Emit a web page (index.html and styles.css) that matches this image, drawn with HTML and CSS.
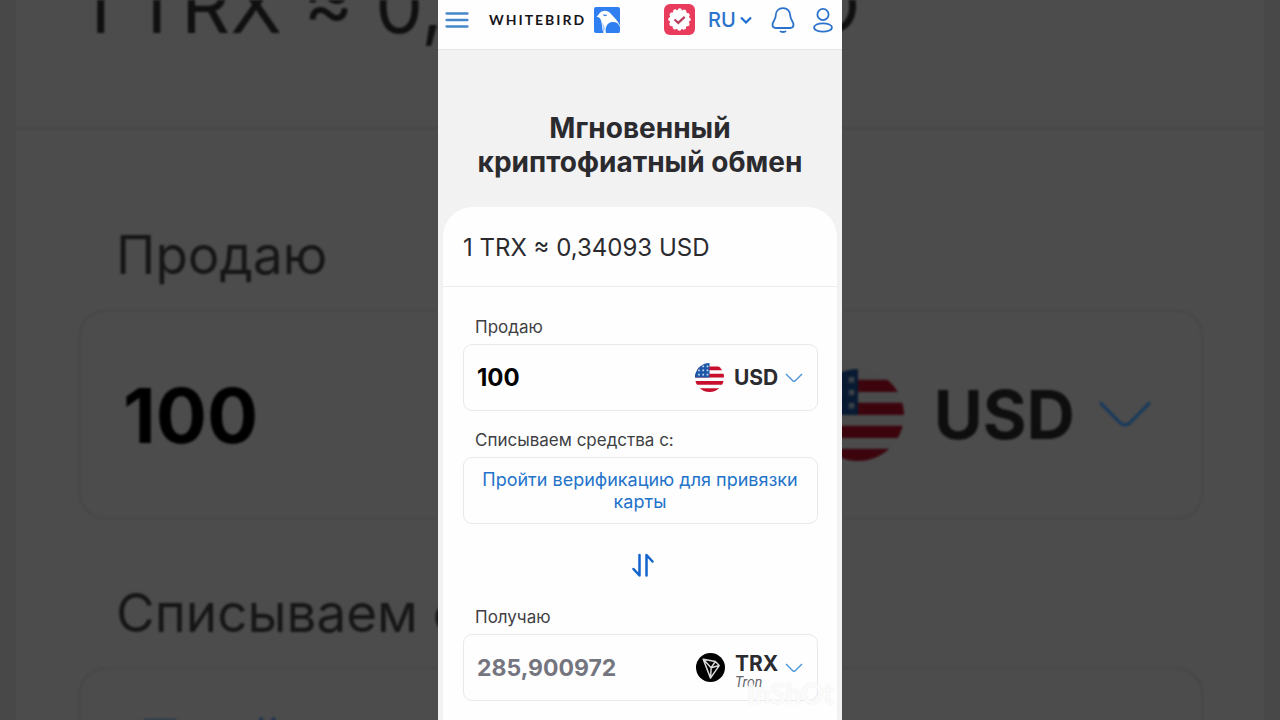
FILE: index.html
```html
<!DOCTYPE html>
<html lang="ru">
<head>
  <meta charset="UTF-8" />
  <meta name="viewport" content="width=device-width, initial-scale=1.0" />
  <title>Whitebird</title>
  <link rel="stylesheet" href="styles.css">
</head>
<body>
  <!-- enlarged dark copy behind the phone column -->
  <div class="backdrop" aria-hidden="true">
    <div class="backdrop-card">
      <div class="backdrop-rate">1 TRX ≈ 0,34093 USD</div>
      <div class="backdrop-form">
        <div class="backdrop-label">Продаю</div>
        <div class="backdrop-field">
          <span class="backdrop-amount">100</span>
          <svg class="backdrop-flag" viewBox="0 0 30 30"><use href="#flag-us" /></svg>
          <span class="backdrop-code">USD</span>
          <svg class="backdrop-arrow" viewBox="0 0 18 10"><path d="M1 1l6.500 6.600q1.500 1.200 3 0L17 1" /></svg>
        </div>
        <div class="backdrop-label">Списываем средства с:</div>
        <div class="backdrop-field backdrop-link">Пройти верификацию для привязки карты</div>
      </div>
    </div>
  </div>

  <div class="phone">
    <header class="topbar">
      <button class="icon-btn" aria-label="Меню">
        <svg width="24" height="24" viewBox="0 0 24 24" fill="none" stroke="#4787cc" stroke-width="2.300" stroke-linecap="round">
          <path d="M1.500 5.500h21M1.500 12h21M1.500 18.500h21" />
        </svg>
      </button>
      <a class="logo" href="#">
        <span>WHITEBIRD</span>
        <svg width="26" height="26" viewBox="0 0 26 26">
          <rect width="26" height="26" rx="2" fill="#2f7ff0" />
          <path d="M2.500 9.800C4.500 8.700 5 6 7.500 4.600 11 2.600 15 4 17.300 7.300c3.600 3.800 6.400 6.200 8.700 11.200v6.500l-4 1H9.500C7.800 22 8.200 18 7.300 14.500 6.800 12 5.800 10.200 2.500 9.800z" fill="#fff" />
          <path d="M9.500 26c-1-3.500-.6-6.800-1.300-10.500C10 18 10.500 19 11 22z" fill="#a9cbfa" />
          <path d="M12 26c-1.500-6 1.500-10.500 6.500-11 3.500-.2 6.500 1.800 7.500 5V24q0 2-2 2z" fill="#2f7ff0" />
          <path d="M9.500 7.600c.6 1.300 2.300 1.300 3 0" fill="none" stroke="#2f7ff0" stroke-width="1.200" />
        </svg>
      </a>
      <div class="topbar-right">
        <button class="icon-btn" aria-label="Верификация">
          <svg width="31" height="31" viewBox="0 0 31 31">
            <rect width="31" height="31" rx="6" fill="#e93b5c" />
            <circle cx="15.500" cy="15.500" r="9.800" fill="#fff" />
            <circle cx="15.500" cy="15.500" r="9.200" fill="none" stroke="#fff" stroke-width="4.200" stroke-linecap="round" stroke-dasharray="0.01 4.807" />
            <path d="M10.500 15.500l3.800 3.400 6.400-6" fill="none" stroke="#b8405f" stroke-width="2.200" />
          </svg>
        </button>
        <div class="lang">
          <select aria-label="Язык">
            <option>RU</option>
          </select>
          <svg width="12" height="8" viewBox="0 0 12 8" fill="none" stroke="#1f6fd0" stroke-width="2.200"><path d="M1 1.500l5 5 5-5" /></svg>
        </div>
        <button class="icon-btn bell" aria-label="Уведомления">
          <svg width="24" height="26" viewBox="0 0 24 26" fill="none" stroke="#2b72cc" stroke-width="1.800" stroke-linecap="round">
            <path d="M12 1.200c-4.600 0-7.300 3.200-7.300 7.600 0 4.200-3.200 5.600-3.200 9 0 2 1.200 3.200 3.200 3.200h14.600c2 0 3.200-1.200 3.200-3.200 0-3.400-3.200-4.800-3.200-9 0-4.400-2.700-7.600-7.300-7.600z" />
            <path d="M9.500 24.500q2.500 1 5 0" />
          </svg>
        </button>
        <button class="icon-btn" aria-label="Профиль">
          <svg width="20" height="26" viewBox="0 0 20 26" fill="none" stroke="#2b72cc" stroke-width="1.800">
            <circle cx="10" cy="7.500" r="5.600" />
            <ellipse cx="10" cy="20.500" rx="9" ry="4.200" />
          </svg>
        </button>
      </div>
    </header>

    <main>
      <h1>Мгновенный криптофиатный обмен</h1>

      <form class="card">
        <div class="rate">1 TRX ≈ 0,34093 USD</div>

        <div class="fields">
          <div class="group">
            <label for="sell">Продаю</label>
            <div class="field">
              <input type="text" id="sell" value="100" />
              <svg class="coin" viewBox="0 0 30 30">
                <defs>
                  <clipPath id="flag-clip"><circle cx="15" cy="15" r="15" /></clipPath>
                  <g id="flag-us" clip-path="url(#flag-clip)">
                    <path class="stripe-light" d="M0 0h30v30H0z" />
                    <path fill="#c8102e" d="M0 3.500h30v4H0zM0 11h30v4H0zM0 18.500h30v4H0zM0 26h30v4H0z" />
                    <path fill="#1c57a8" d="M0 0h15v15H0z" />
                    <path fill="none" stroke="#c5d8f0" stroke-width="1.800" stroke-dasharray="1.800 2.600" d="M3.200 3.500H15M3.200 7.700H15M3.200 12H15" />
                  </g>
                </defs>
                <use href="#flag-us" />
              </svg>
              <div class="currency">
                <select aria-label="Валюта продажи">
                  <option>USD</option>
                </select>
              </div>
              <svg class="arrow" viewBox="0 0 18 10"><path d="M1 1l6.500 6.600q1.500 1.200 3 0L17 1" /></svg>
            </div>
          </div>

          <div class="group">
            <div class="caption">Списываем средства с:</div>
            <a class="field verify" href="#">Пройти верификацию для привязки карты</a>
          </div>

          <button type="button" class="swap" aria-label="Поменять местами">
            <svg width="22" height="24" viewBox="0 0 22 24" fill="none" stroke="#1263cc" stroke-width="2.500" stroke-linecap="round" stroke-linejoin="round">
              <path d="M7.500 2v20.500L1.500 16M14.500 22.500V2l6 6.500" />
            </svg>
          </button>

          <div class="group">
            <label for="get">Получаю</label>
            <div class="field">
              <input type="text" id="get" class="muted" value="285,900972" />
              <svg class="coin" viewBox="0 0 30 30">
                <circle cx="15" cy="15" r="15" fill="#000" />
                <path d="M7.500 6.500l12.500 2.300 4 4.200-9 13zM7.500 6.500l8.200 8.700L20 8.800M15.700 15.200L24 13M15.700 15.200L15 26" fill="none" stroke="#ddd" stroke-width="1.500" stroke-linejoin="round" />
              </svg>
              <div class="currency with-name">
                <select aria-label="Валюта получения">
                  <option>TRX</option>
                </select>
                <span>Tron</span>
              </div>
              <svg class="arrow" viewBox="0 0 18 10"><path d="M1 1l6.500 6.600q1.500 1.200 3 0L17 1" /></svg>
            </div>
          </div>
        </div>
      </form>
    </main>

    <div class="watermark">InShOt</div>
  </div>
</body>
</html>
```
FILE: styles.css
```css
* {
  box-sizing: border-box;
}

body {
  margin: 0;
  background-color: #484848;
  font-family: Inter, "Noto Sans", sans-serif;
  color: #2b2b2f;
}

button, select, input {
  font-family: inherit;
  color: inherit;
  background: none;
  border: none;
  padding: 0;
  margin: 0;
  outline: none;
}

select {
  appearance: none;
  cursor: pointer;
}

svg {
  display: block;
  flex-shrink: 0;
}

a {
  text-decoration: none;
}

/* backdrop */
.backdrop {
  position: fixed;
  inset: 0;
  overflow: hidden;
  padding: 0 16px;
  filter: blur(1px);
}

.backdrop-card {
  min-height: 100%;
  background-color: #4c4c4c;
}

.backdrop-rate {
  margin-top: -41px;
  padding: 0 64px 76px;
  border-bottom: 3px solid #474747;
  font-size: 76px;
  line-height: 92px;
  color: #101010;
}

.backdrop-form {
  padding: 90px 60px 0 62px;
}

.backdrop-label {
  padding-left: 38px;
  margin-bottom: 19px;
  font-size: 53px;
  line-height: 70px;
  color: #161616;
}

.backdrop-field {
  display: flex;
  align-items: center;
  height: 211px;
  margin-bottom: 58px;
  padding: 0 48px 0 42px;
  border: 3px solid #484848;
  border-radius: 28px;
  font-size: 76px;
  font-weight: 700;
}

.backdrop-amount {
  flex: 1;
  color: #000;
}

.backdrop-flag {
  width: 92px;
  height: 92px;
  filter: brightness(0.3);
}

.backdrop-code {
  margin: 0 22px 0 30px;
  font-size: 67px;
  color: #0e0e0e;
}

.backdrop-arrow {
  width: 56px;
  height: 32px;
}

.backdrop-arrow path {
  fill: none;
  stroke: #17395c;
  stroke-width: 1;
}

.backdrop-link {
  align-items: flex-start;
  padding-top: 36px;
  padding-left: 58px;
  font-size: 57px;
  font-weight: 400;
  line-height: 70px;
  color: #0c2b52;
}

.stripe-light {
  fill: #fbfbfb;
}

/* phone column */
.phone {
  position: relative;
  max-width: 404px;
  min-height: 100vh;
  margin: 0 auto;
  background-color: #f2f2f3;
  overflow: hidden;
}

.topbar {
  display: flex;
  align-items: center;
  height: 50px;
  padding: 0 9px 10px 7px;
  background-color: #fefefe;
  border-bottom: 1px solid #e6e6e8;
}

.icon-btn {
  cursor: pointer;
}

.logo {
  display: flex;
  align-items: center;
  gap: 8px;
  margin-left: 20px;
  font-family: Lato, sans-serif;
  font-size: 14px;
  font-weight: 700;
  letter-spacing: 2px;
  color: #16161a;
}

.topbar-right {
  display: flex;
  align-items: center;
  margin-left: auto;
}

.lang {
  display: flex;
  align-items: center;
  gap: 4px;
  margin-left: 13px;
}

.lang select {
  font-size: 20px;
  font-weight: 500;
  color: #2b72cc;
}

.bell {
  margin: 0 18px 0 19px;
}

h1 {
  margin: 0;
  padding: 61px 20px 28px;
  font-size: 28px;
  line-height: 34px;
  font-weight: 700;
  text-align: center;
}

.card {
  margin: 0 5px;
  background-color: #fefefe;
  border-radius: 30px 30px 0 0;
}

.rate {
  padding: 25px 20px 22px;
  border-bottom: 1px solid #ececee;
  font-size: 24px;
  line-height: 32px;
}

.fields {
  display: flex;
  flex-direction: column;
  gap: 18px;
  padding: 29px 19px 19px 20px;
}

.group label, .caption {
  display: block;
  margin-bottom: 6px;
  padding-left: 12px;
  font-size: 17px;
  line-height: 22px;
  color: #3f3f44;
}

.field {
  display: flex;
  align-items: center;
  min-height: 67px;
  padding: 0 14px 0 13px;
  border: 1px solid #e9e9ec;
  border-radius: 9px;
}

.field input {
  flex: 1;
  min-width: 0;
  font-size: 24px;
  font-weight: 700;
  color: #000;
}

.field input.muted {
  font-size: 23px;
  color: #74757f;
}

.coin {
  width: 29px;
  height: 29px;
}

.currency {
  margin: 0 6px 0 10px;
}

.currency select {
  display: block;
  font-size: 21px;
  line-height: 22px;
  font-weight: 700;
}

.with-name {
  padding-top: 6px;
}

.with-name span {
  display: block;
  font-family: Roboto, sans-serif;
  font-size: 14px;
  line-height: 14px;
  font-style: italic;
  color: #66666c;
}

.arrow {
  width: 18px;
  height: 10px;
}

.arrow path {
  fill: none;
  stroke: #4a94d8;
  stroke-width: 1.4;
}

.verify {
  justify-content: center;
  font-size: 18px;
  line-height: 22px;
  text-align: center;
  color: #2373ca;
}

.swap {
  display: flex;
  align-items: center;
  justify-content: center;
  height: 46px;
  padding-left: 4px;
  cursor: pointer;
}

.watermark {
  position: absolute;
  right: 8px;
  bottom: 10px;
  font-family: Lato, sans-serif;
  font-size: 28px;
  line-height: 34px;
  font-weight: 700;
  color: rgba(255, 255, 255, 0.8);
  text-shadow: 0 0 2px #e8e8e8;
}
```
